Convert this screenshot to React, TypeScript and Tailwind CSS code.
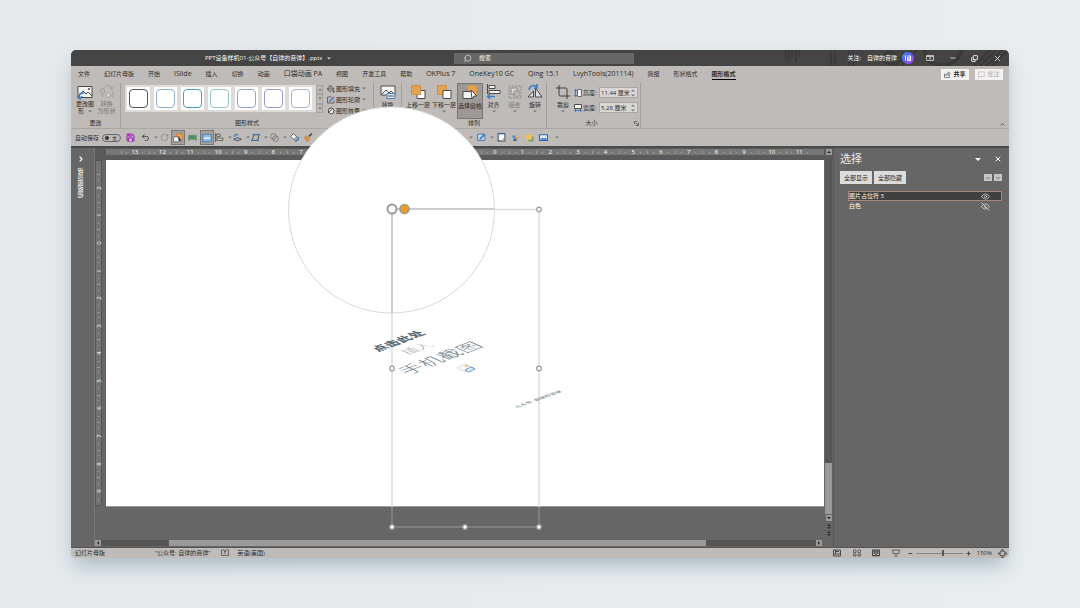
import React from "react";
import {
  Search, Minus, X, Copy, MessageSquare, Undo2, RotateCw, Save, Crop,
  PaintBucket, Eye, EyeOff, ChevronUp, ChevronDown, ChevronRight,
} from "lucide-react";

const tabs = [
  "文件", "幻灯片母版", "开始", "ISlide", "插入", "切换", "动画", "口袋动画 PA", "视图", "开发工具", "帮助",
  "OKPlus 7", "OneKey10 GC", "Qing 15.1", "LvyhTools(201114)", "简报", "形状格式", "图形格式",
];

const styleBorders = [
  "border-[#555555]", "border-[#93b1d2]", "border-[#45a5b0]", "border-[#8fcbb9]",
  "border-[#97a3d2]", "border-[#a197d0]", "border-[#aab1c2]",
];

const hNumbers = [13, 12, 11, 10, 9, 8, 7, 6, 5, 4, 3, 2, 1, 0, 1, 2, 3, 4, 5, 6, 7, 8, 9, 10, 11];
const vNumbers = [2, 1, 0, 1, 2, 3, 4, 5, 6, 7, 8, 9];

type Kids = { children?: React.ReactNode };

function Svg({ children, w = 16, className = "size-4" }: Kids & { w?: number; className?: string }) {
  return (
    <svg viewBox={`0 0 ${w} 16`} className={className} fill="none" stroke="#4a4a4a" strokeWidth="1" aria-hidden="true">
      {children}
    </svg>
  );
}

function Caret({ className = "" }: { className?: string }) {
  return (
    <svg viewBox="0 0 4 3" className={`h-[3px] w-1 shrink-0 ${className}`} aria-hidden="true">
      <path d="M0 .5h4L2 2.5z" fill="#777" />
    </svg>
  );
}

function Group({ label, className = "", children }: Kids & { label: string; className?: string }) {
  return (
    <section className={`flex flex-col border-r border-[#a39f9c] ${className}`}>
      <div className="flex h-9 items-start">{children}</div>
      <div className="text-center leading-[9px]">{label}</div>
    </section>
  );
}

function Tool({ label, icon, className = "", caret = false }: { label: string; icon: React.ReactNode; className?: string; caret?: boolean }) {
  return (
    <button className={`flex h-9 shrink-0 flex-col items-center whitespace-nowrap pt-px ${className}`}>
      {icon}
      <span className="mt-px leading-[8px]">{label}</span>
      {caret && <Caret className="mt-px" />}
    </button>
  );
}

function Quick({ children, caret = false, className = "w-[14px]" }: Kids & { caret?: boolean; className?: string }) {
  return (
    <button className={`flex h-[15px] shrink-0 items-center justify-center gap-1 ${className}`}>
      {children}
      {caret && <Caret />}
    </button>
  );
}

function Field({ label, value, icon }: { label: string; value: string; icon: React.ReactNode }) {
  return (
    <label className="flex h-[11px] items-center">
      {icon}
      <span className="w-4 whitespace-nowrap">{label}:</span>
      <span className="flex h-[11px] w-[39px] items-center border border-[#aaa6a3] bg-[#dad7d5]">
        <input className="w-[31px] bg-transparent pl-px text-[6px] leading-[8px] outline-none" defaultValue={value} />
        <svg viewBox="0 0 4 8" className="h-2 w-1" fill="#777" aria-hidden="true">
          <path d="M0 2.5 2 .5 4 2.5zM0 5.5h4L2 7.5z" />
        </svg>
      </span>
    </label>
  );
}

function TitleBar() {
  return (
    <header className="relative flex h-4 shrink-0 items-center bg-[#444] text-[6px] text-white">
      <svg viewBox="0 0 240 16" className="absolute right-0 top-0 h-4 w-60" fill="none" stroke="#393939" aria-hidden="true">
        <path d="M17 0v9M20 0v11M23 0v8M27 0v12M30 0v6M62 0v16M66 0v16M80 0v16M84 0v16" strokeWidth="1.5" />
        <circle cx="121" cy="8" r="6" strokeWidth="3" />
        <path d="M156 0c0 20 34 20 36 0" strokeWidth="4" />
        <path d="m205 16 16-16M211 16 227 0M217 16 233 0M223 16 239 0M126 16l16-16M132 16l16-16" strokeWidth="2" />
      </svg>
      <div className="flex w-[383px] shrink-0 items-center gap-1 pl-[134px]">
        <h1 className="whitespace-nowrap">PPT设备样机01-公众号【自律的音律】.pptx</h1>
        <svg viewBox="0 0 4 3" className="h-[3px] w-1" fill="#ddd" aria-hidden="true"><path d="M0 .5h4L2 2.5z" /></svg>
      </div>
      <label className="flex h-[11px] w-[180px] items-center gap-[7px] bg-[#666] pl-[9px]">
        <Search className="size-[9px] -scale-x-100" strokeWidth={1.5} />
        <input aria-label="搜索" placeholder="搜索" className="w-24 bg-transparent text-[6px] leading-[9px] outline-none placeholder:text-white" />
      </label>
      <div className="relative ml-auto flex items-center">
        <span>关注:</span>
        <span className="ml-[6px]">自律的音律</span>
        <span className="ml-[5px] flex size-3 items-center justify-center rounded-full bg-gradient-to-br from-[#2f9bff] via-[#5a5cf0] to-[#c23cf0]">
          <svg viewBox="0 0 8 8" className="size-2" fill="none" stroke="#fff" strokeWidth="1" aria-hidden="true">
            <path d="M1.5 1.5v5M3.5 3v3.500M3.500 2h3v4.500h-3M5 3v3" />
          </svg>
        </span>
        <button aria-label="功能区显示选项" className="ml-[12px]">
          <svg viewBox="0 0 8 8" className="size-2" fill="none" stroke="#ddd" strokeWidth=".8" aria-hidden="true">
            <path d="M.5 1.500h7v5h-7zM.5 2.500h7M4 6V3.500M3 4.500l1-1 1 1" />
          </svg>
        </button>
        <button aria-label="最小化" className="ml-[15px]"><Minus className="size-2" strokeWidth={2} /></button>
        <button aria-label="还原" className="ml-[14px]"><Copy className="size-[7px] -scale-x-100 rotate-180" strokeWidth={3} /></button>
        <button aria-label="关闭" className="ml-[15px] mr-[7px]"><X className="size-[9px]" strokeWidth={2} /></button>
      </div>
    </header>
  );
}

function TabRow() {
  return (
    <nav className="flex h-[17px] shrink-0 items-center gap-[14px] pl-[7px] pr-[6px] text-[6px]">
      {tabs.map((t, i) => (
        <button
          key={t}
          className={`shrink-0 whitespace-nowrap border-b leading-[10px] ${/[A-Z]/.test(t) ? "text-[7px]" : ""} ${i === tabs.length - 1 ? "border-black font-bold" : "border-transparent"}`}
        >
          {t}
        </button>
      ))}
      <div className="ml-auto flex gap-[6px] pb-px">
        <button className="flex h-[11px] w-7 items-center justify-center gap-[2px] bg-[#f3f2f1] font-bold">
          <Svg className="size-[7px]"><path d="M3 7H1v8h12v-4M4 11c0-5 4-6 6-6V2l5 5-5 4V8c-3 0-5 1-6 3z" strokeWidth="1.500" /></Svg>共享
        </button>
        <button className="flex h-[11px] w-7 items-center justify-center gap-[2px] bg-[#f3f2f1] text-[#aaa]"><MessageSquare className="size-[7px]" />批注</button>
      </div>
    </nav>
  );
}

function Ribbon() {
  return (
    <div className="relative flex h-[46px] shrink-0 border-b border-[#aaa6a3]">
      <Group label="更改" className="w-[50px]">
        <button className="flex w-7 shrink-0 flex-col items-center whitespace-nowrap leading-[7px]">
          <Svg className="my-px size-4">
            <path d="M1 2.500h14v11H1z" fill="#f4f4f4" /><path d="m2 12 4-5 3 3 2-2 4 4" /><circle cx="12" cy="5" r=".7" />
            <path d="M7 9.500c-4-2-6 2-4 5m-3-2 3 2.500 2-3" stroke="#3d7cc0" strokeWidth="1.500" />
          </Svg>
          更改图<span className="flex items-center gap-1">形<Caret /></span>
        </button>
        <button className="flex w-[15px] shrink-0 flex-col items-center whitespace-nowrap leading-[7px] text-[#777]">
          <Svg className="my-px size-4">
            <g stroke="#a09c99"><ellipse cx="3.500" cy="7" rx="2" ry="3" /><path d="M3.500 10v3M6 3c3-3 6-1 7 2M13 5l-2-1m2 1 1-2" /><path d="m9 8 3 3-3 3-2-3z" fill="#dcd9d7" /><path d="M14 7v7" /></g>
          </Svg>
          转换<span>为形状</span>
        </button>
      </Group>

      <Group label="图形样式" className="w-[253px]">
        <div className="ml-[4px] mt-[2px] flex shrink-0 gap-1 bg-[#dedbd9] p-[2px] pr-1">
          {styleBorders.map((c) => (
            <button key={c} aria-label="样式" className="flex size-[23px] items-center justify-center bg-white p-[2px]">
              <span className={`size-full rounded-[4px] border ${c}`} />
            </button>
          ))}
        </div>
        <div className="mt-[2px] flex h-7 w-[7px] shrink-0 flex-col">
          {[0, 1, 2].map((n) => (
            <button key={n} aria-label="滚动" className="flex flex-1 items-center justify-center border border-[#a5a19e]">
              <Caret className={n === 0 ? "rotate-180" : ""} />
            </button>
          ))}
        </div>
        <div className="ml-1 flex shrink-0 flex-col whitespace-nowrap">
          {[
            ["图形填充", <PaintBucket key="a" className="size-2" />],
            ["图形轮廓", <Svg key="b" className="size-2"><path d="M14 9v5H1V2h8" strokeWidth="1.500" /><path d="M5 11 14 2" stroke="#3d7cc0" strokeWidth="3" /></Svg>],
            ["图形效果", <Svg key="c" className="size-2"><path d="m4 3 6-1 4 4-1 6-5 2-5-4z" fill="#f4f4f4" strokeWidth="2" /><path d="m2 12 9-8" strokeWidth="2" /></Svg>],
          ].map(([t, ic]) => (
            <button key={t as string} className="flex h-[11px] items-center gap-px">{ic}<span>{t}</span><Caret className="ml-px" /></button>
          ))}
        </div>
      </Group>

      <div className="w-[28px] border-r border-[#a39f9c]">
        <Tool label="替换" className="w-[27px]" icon={
          <Svg><path d="M1 2h14v9H1z" fill="#f4f4f4" /><path d="m2 10 4-4 3 3 2-2 3 3" /><path d="M7 9.500h8v5H7z" fill="#e4edf7" stroke="#3d7cc0" /><path d="M8 12h6" /></Svg>} />
      </div>

      <Group label="排列" className="w-[145px]">
        <Tool caret label="上移一层" className="ml-[3px] w-[26px]" icon={<Svg><path d="M7 6.500h8v8H7z" fill="#fff" /><path d="M1.500 1.500h9v9h-9z" fill="#e3a352" stroke="#cf9145" /></Svg>} />
        <Tool caret label="下移一层" className="w-[26px]" icon={<Svg><path d="M1.500 1.500h9v9h-9z" fill="#e3a352" stroke="#cf9145" /><path d="M7 6.500h8v8H7z" fill="#fff" /></Svg>} />
        <Tool label="选择窗格" className="w-[26px] border border-[#777] bg-[#9c9996]" icon={<Svg><path d="M6 .5h9v10H6z" fill="#e3a352" stroke="#cf9145" /><path d="M1 6.500h10v7H1z" fill="#f4f4f4" /><path d="m9 5 6 6h-3l-2 3z" fill="#fff" /></Svg>} />
        <Tool caret label="对齐" className="w-[21px]" icon={<Svg><path d="M1.500 0v10" /><path d="M3 1.500h6v3H3zM3 6.500h11v3H3z" fill="#f4f4f4" /><path d="M2 12.500h7M4 10l-2.500 2.500L4 15" stroke="#3d7cc0" strokeWidth="1.500" /></Svg>} />
        <Tool caret label="组合" className="w-[21px] text-[#777]" icon={<Svg><path d="M2 2h12v12H2z" stroke="#8d8a88" strokeDasharray="2 1" /><path d="M4 4h6v6H4zM7 7h5v5H7z" stroke="#8d8a88" fill="#dcd9d7" /></Svg>} />
        <Tool caret label="旋转" className="w-[20px]" icon={<Svg><path d="M8.500 4v9H15zM6.500 7v6H1z" fill="#d8e0e8" /><path d="M2 6c0-4 5-6 8-3m-3 1h3V0" stroke="#3d7cc0" strokeWidth="1.500" /></Svg>} />
      </Group>

      <Group label="大小" className="relative w-[94px] pr-1">
        <Tool caret label="裁剪" className="ml-[6px] w-[20px]" icon={<Crop className="size-4" strokeWidth={1.3} />} />
        <div className="ml-px mt-1 flex flex-col gap-[4px]">
          <Field label="高度" value="11.44 厘米" icon={<Svg className="mr-px size-2"><path d="M7 1h8v14H7z" fill="#f4f4f4" strokeWidth="1.500" /><path d="M3 1v14M0 4l3-3 3 3M0 12l3 3 3-3" stroke="#3d7cc0" strokeWidth="2" /></Svg>} />
          <Field label="宽度" value="5.28 厘米" icon={<Svg className="mr-px size-2"><path d="M1 1h14v8H1z" fill="#f4f4f4" strokeWidth="2" /><path d="M1 13h14M4 10l-3 3 3 3M12 10l3 3-3 3" stroke="#3d7cc0" strokeWidth="2" /></Svg>} />
        </div>
        <svg viewBox="0 0 6 6" className="absolute bottom-[2px] right-px size-[5px]" fill="none" stroke="#555" aria-hidden="true"><path d="M.5 4V.5H4M2 2l3 3M5.500 2v3.500H2" /></svg>
      </Group>
      <button aria-label="折叠功能区" className="ml-auto mr-[3px] self-end"><ChevronUp className="size-[7px]" /></button>
    </div>
  );
}

function QuickBar() {
  return (
    <div className="flex h-[19px] shrink-0 items-center border-b-2 border-[#4a4a4a] pl-1">
      <label className="flex items-center gap-[3px] whitespace-nowrap">
        自动保存
        <span className="relative flex h-2 w-[19px] items-center justify-end rounded-full border border-[#666] pr-[3px] text-[5px]">
          <input type="checkbox" className="absolute left-[2px] size-1 appearance-none rounded-full bg-[#333]" />关
        </span>
      </label>
      <Quick className="w-[18px]"><Save className="size-[9px] fill-[#e9c8ee] text-[#9c35ac]" strokeWidth={3.5} /></Quick>
      <Quick caret className="w-[20px]"><Undo2 className="size-[9px]" /></Quick>
      <Quick className="w-[10px]"><RotateCw className="size-[9px] text-[#8a8785]" /></Quick>
      <Quick className="ml-[2px] w-[14px] border border-[#777] bg-[#a5a19e]"><Svg className="size-[10px]"><path d="M6 1h9v9H6z" fill="#f0a04b" stroke="#c07c2c" /><path d="M1 6h9v8H1z" fill="#f4f4f4" /><path d="m8 6 5 6-3 1z" fill="#333" /></Svg></Quick>
      <Quick className="w-[15px]"><Svg className="size-[9px]"><path d="M1 4h14v7H1z" fill="#5c9c68" stroke="#4d8559" /><path d="M2 11v3M14 11v3M5 5v5M9 5v5" /></Svg></Quick>
      <Quick className="w-[14px] border border-[#777] bg-[#a5a19e]"><Svg className="size-[10px]"><path d="M1 2h14v12H1z" fill="#8db8e6" stroke="#34679c" /><path d="M3 8h10" stroke="#fff" strokeWidth="2" /></Svg></Quick>
      <Quick caret className="w-[18px]"><Svg className="size-[9px]"><path d="M1 0v16" strokeWidth="1.500" /><path d="M3 2h6v4H3zM3 9h11v4H3z" fill="#ddd" strokeWidth="1.500" /></Svg></Quick>
      <Quick caret className="w-[18px]"><Svg className="size-[9px]"><path d="M1 11 8 8l7 3-7 3z" fill="#8db8e6" strokeWidth="1.500" /><path d="M2 7c0-4 4-6 7-3" stroke="#3d7cc0" strokeWidth="2" /></Svg></Quick>
      <Quick caret className="w-[19px]"><Svg className="size-[9px]"><path d="M5 3h9l-2 10H2z" strokeWidth="1.500" /><path d="M4 2h2v2H4zM13 2h2v2h-2zM1 12h2v2H1zM11 12h2v2h-2z" fill="#3d7cc0" stroke="#3d7cc0" strokeWidth="1.500" /></Svg></Quick>
      <Quick caret className="w-[18px]"><Svg className="size-[9px]"><circle cx="6" cy="6" r="5" stroke="#777" strokeWidth="1.500" /><circle cx="10" cy="10" r="5" stroke="#777" strokeWidth="1.500" /></Svg></Quick>
      <Quick><Svg className="size-[9px]"><path d="m6 1 6 6-5 5-6-6z" fill="#f4f4f4" strokeWidth="1.500" /><path d="M15 7v4l-6 4" stroke="#3d7cc0" strokeWidth="3" /></Svg></Quick>
      <Quick><Svg className="size-[9px]"><path d="m9 6 5-5" strokeWidth="3" /><path d="m3 5 7 4-3 6-6-5z" fill="#e8913a" stroke="#b96b26" /></Svg></Quick>
      <Quick className="ml-[154px] w-1"><Caret /></Quick>
      <Quick caret className="ml-1 w-[17px]"><Svg className="size-[9px]"><path d="M1 2h13v11H1z" fill="#cbdcf0" stroke="#34679c" strokeWidth="1.500" /><path d="m5 11 8-8" stroke="#3d7cc0" strokeWidth="3" /></Svg></Quick>
      <Quick><Svg className="size-[9px]"><path d="M2 1h12v13H2z" fill="#fff" stroke="#3e5c84" strokeWidth="2" /><path d="M12 9v4H8" stroke="#e8913a" strokeWidth="2" /></Svg></Quick>
      <Quick><Svg className="size-[8px]"><path d="M3 3h6v5H3z" fill="#4b8bd0" stroke="none" /><path d="M9 5h6v5H9z" fill="#f0a04b" stroke="none" /><path d="M5 9h6v5H5z" fill="#2d65a4" stroke="none" /></Svg></Quick>
      <Quick><Svg className="size-[9px]"><path d="M6 6h9v9H6z" fill="#7a9d6d" stroke="none" /><path d="M2 2h10v10H2z" fill="#efc05e" stroke="none" /></Svg></Quick>
      <Quick><Svg className="size-[9px]"><path d="M1 3h14v10H1z" fill="#e6f0fa" stroke="#2d65a4" strokeWidth="2" /><path d="m2 12 4-4 3 2 2-2 3 4z" fill="#2d7ac6" stroke="none" /></Svg></Quick>
      <Quick><Caret /></Quick>
    </div>
  );
}

function ScrollArrow({ className }: { className: string }) {
  return (
    <button aria-label="滚动" className="flex size-[6px] shrink-0 items-center justify-center bg-[#9a9a9a]">
      <svg viewBox="0 0 4 4" className={`size-1 ${className}`} fill="#222" aria-hidden="true"><path d="M0 3h4L2 1z" /></svg>
    </button>
  );
}

function Editor() {
  return (
    <div className="flex min-w-0 flex-1 flex-col">
      <div className="flex h-3 shrink-0 bg-[#5a5a5a] pl-[11px] pt-px">
        <div className="flex h-[6px] min-w-0 flex-1 items-center bg-[#777] pl-[15px] pr-[11px] text-[6px] leading-[6px] text-white">
          {hNumbers.map((n, i) => (
            <span key={i} className="flex flex-1 items-center justify-between">
              <i className="h-[3px] w-px bg-[#999]" /><i className="size-px bg-[#aaa]" />
              {n}
              <i className="size-px bg-[#aaa]" /><i className="size-px" />
            </span>
          ))}
        </div>
        <div className="flex w-[9px] justify-center"><ScrollArrow className="" /></div>
      </div>
      <div className="flex min-h-0 flex-1">
        <div className="w-[11px] shrink-0">
          <div className="flex h-[346px] w-[7px] flex-col border border-[#555] bg-[#737373] pt-[13px] text-[6px] text-white">
            {vNumbers.map((n, i) => (
              <span key={i} className="flex flex-1 flex-col items-center justify-between">
                <i className="h-px w-[3px] bg-[#999]" /><i className="size-px bg-[#aaa]" />
                <span className="-rotate-90 leading-[6px]">{n}</span>
                <i className="size-px bg-[#aaa]" /><i className="size-px" />
              </span>
            ))}
          </div>
        </div>
        <div className="flex min-w-0 flex-1 flex-col">
          <main className="h-[347px] border-b border-[#999] bg-white" />
        </div>
        <div className="flex w-[9px] shrink-0 flex-col items-center bg-[#666]">
          <div className="flex w-[7px] flex-1 flex-col justify-end bg-[#555]"><div className="h-[51px] bg-[#9a9a9a]" /></div>
          <div className="mt-px"><ScrollArrow className="rotate-180" /></div>
          <svg viewBox="0 0 6 18" className="h-[18px] w-[6px]" fill="#2c2c2c" aria-hidden="true">
            <path d="M1 5h4L3 3zM1 6h4L3 8zM1 12h4l-2-2zM1 13h4l-2 2z" />
          </svg>
        </div>
      </div>
      <div className="flex h-2 shrink-0 items-center pb-px pr-[11px]">
        <ScrollArrow className="-rotate-90" />
        <div className="flex h-[6px] flex-1 bg-[#555] pl-[68px]"><div className="w-[83%] bg-[#9a9a9a]" /></div>
        <ScrollArrow className="rotate-90" />
      </div>
    </div>
  );
}

function SelectionPane() {
  return (
    <aside className="w-[176px] shrink-0 border-l border-[#5a5a5a] pl-[6px] pr-[7px] pt-[5px] text-[6px] text-white">
      <div className="flex h-3 items-center">
        <h2 className="text-[11px] leading-3 text-[#e8e8e8]">选择</h2>
        <button aria-label="任务窗格选项" className="ml-auto"><svg viewBox="0 0 6 3" className="h-[3px] w-[6px]" fill="#fff" aria-hidden="true"><path d="M0 0h6L3 3z" /></svg></button>
        <button aria-label="关闭" className="ml-[13px]"><X className="size-2" strokeWidth={3} /></button>
      </div>
      <div className="mt-[6px] flex items-center gap-[2px] text-[#222]">
        <button className="h-[13px] w-8 bg-[#dcdcdc]">全部显示</button>
        <button className="h-[13px] w-8 bg-[#dcdcdc]">全部隐藏</button>
        <button aria-label="上移" className="ml-auto flex h-[7px] w-2 items-center justify-center bg-[#c6c6c6]"><ChevronUp className="size-[6px]" /></button>
        <button aria-label="下移" className="flex h-[7px] w-2 items-center justify-center bg-[#c6c6c6]"><ChevronDown className="size-[6px]" /></button>
      </div>
      <ul className="ml-2 mt-[7px] leading-[8px]">
        <li className="flex h-[10px] items-center justify-between border border-[#a5887a] bg-[#404040] pr-[11px]"><span>图片占位符 3</span><Eye className="size-[9px]" strokeWidth={1.5} /></li>
        <li className="flex h-[10px] items-center justify-between border border-transparent pr-[11px]"><span>白色</span><EyeOff className="size-[9px]" strokeWidth={1.5} /></li>
      </ul>
    </aside>
  );
}

function StatusBar() {
  return (
    <footer className="flex h-[11px] shrink-0 items-center border-t border-[#555] pl-1 pr-[2px]">
      <span>幻灯片母版</span>
      <span className="ml-[50px]">“公众号: 自律的音律”</span>
      <Svg className="ml-[11px] size-[8px]"><path d="M1 2h6l1 1 1-1h6v11H9l-1 1-1-1H1zM8 5v6M6 5h4" strokeWidth="1.500" /></Svg>
      <span className="ml-2">英语(美国)</span>
      <div className="ml-auto flex items-center">
        <Svg className="size-[8px]"><path d="M1 2h14v12H1zM1 10h14M4 5h8M5 2v8" strokeWidth="2" /></Svg>
        <Svg className="ml-3 size-[8px]"><path d="M1 2h5v5H1zM10 2h5v5h-5zM1 10h5v4H1zM10 10h5v4h-5z" strokeWidth="1.500" /></Svg>
        <Svg className="ml-[11px] size-[8px]"><path d="M1 2h14v11H1zM8 2v13M3 5h3M3 8h3M10 5h3M10 8h3" strokeWidth="2.500" /></Svg>
        <Svg className="ml-3 size-[8px]"><path d="M0 2h16M2 2v7h12V2M8 9v5M5 14h6" strokeWidth="1.500" /></Svg>
        <Minus className="ml-2 size-[5px]" strokeWidth={4} />
        <input
          type="range"
          aria-label="缩放"
          defaultValue={58}
          className="mx-[3px] h-[7px] w-[47px] appearance-none bg-[linear-gradient(#8a8785,#8a8785)] bg-[length:100%_1px] bg-center bg-no-repeat [&::-webkit-slider-thumb]:h-[6px] [&::-webkit-slider-thumb]:w-[2px] [&::-webkit-slider-thumb]:appearance-none [&::-webkit-slider-thumb]:bg-[#555]"
        />
        <svg viewBox="0 0 5 5" className="size-[5px]" stroke="#444" aria-hidden="true"><path d="M.5 2.500h4M2.500.5v4" /></svg>
        <span className="ml-[6px]">150%</span>
        <Svg className="ml-[6px] size-[9px]"><path d="M4 4h8v8H4z" strokeWidth="1.500" /><path d="m8 0 2 2H6zM8 16l2-2H6zM0 8l2-2v4zM16 8l-2-2v4z" fill="#333" /></Svg>
      </div>
    </footer>
  );
}

/* Selected placeholder with its resize handles and the zoomed corner. */
function SelectionDrawing() {
  return (
    <svg viewBox="71 50 938 508" className="pointer-events-none absolute left-0 top-0 h-[508px] w-[938px]" fill="none">
      <g stroke="#dcdcdc" strokeWidth="1.500">
        <path d="M392 313v194M539 210v297M494 209.500h45" />
        <path d="M392 507v20h147v-20" stroke="#969696" strokeWidth="1" />
      </g>
      <g fill="#66777f">
        <text transform="matrix(1 -.38 .88 .4 378 352)" fontSize="12" fontWeight="900" fill="#5c6e77">点击此处</text>
        <text transform="matrix(1 -.36 .88 .4 408 355)" fontSize="13" fontWeight="300" fill="#9aa5aa">插入</text>
        <text transform="matrix(1.060 -.4 .88 .4 408 375)" fontSize="18" fontWeight="300">手机截图</text>
        <text transform="matrix(1.060 -.38 .8 .4 517 408)" fontSize="5" fontWeight="700" fill="#8d999e">公众号: 自律的音律</text>
      </g>
      <path d="m457 368 8-4 9 4-8 4z" fill="#fafafa" stroke="#c3cacd" strokeWidth=".7" />
      <path d="m465 370 6-3 4 2-6 3z" fill="#e6eefb" stroke="#4b80d0" strokeWidth=".8" />
      <path d="m464 366 3-1 2 1-3 1z" fill="#f2b54a" />
      <circle cx="391.500" cy="210" r="103" fill="#fff" stroke="#d9d9d9" />
      <path d="M392 209v104M392 209h102" stroke="#bdbdbd" strokeWidth="1.500" />
      <g fill="#fff" stroke="#9b9b9b">
        <circle cx="392" cy="209" r="4.500" strokeWidth="2" />
        <circle cx="404.500" cy="209" r="4.500" strokeWidth="1.700" fill="#f39c1c" />
        {[[539, 209.5], [392, 368.5], [539, 368.5], [392, 527], [465, 527], [539, 527]].map(([x, y]) => (
          <circle key={`${x}-${y}`} cx={x} cy={y} r="2.300" strokeWidth="1.200" />
        ))}
      </g>
    </svg>
  );
}

export default function App() {
  return (
    <div className="flex min-h-screen bg-gradient-to-r from-[#e5e9ec] to-[#e9edef] px-[71px] py-[50px] font-['Open_Sans','Noto_Sans_CJK_SC',sans-serif] text-[6px] leading-[8px] text-[#2b2b2b]">
      <div className="relative flex min-w-0 flex-1 flex-col overflow-hidden rounded-[5px] bg-[#bfbbb8] shadow-[0_10px_20px_-3px_#a9b7bf]">
        <TitleBar />
        <TabRow />
        <Ribbon />
        <QuickBar />
        <div className="flex min-h-0 flex-1 bg-[#666]">
          <div className="flex w-[24px] shrink-0 flex-col items-center border-r border-[#777] pr-1 pt-[7px] text-white">
            <button aria-label="展开缩略图"><ChevronRight className="size-2" strokeWidth={3.5} /></button>
            <span className="mt-[5px] rotate-180 text-[6px] leading-[8px] [writing-mode:vertical-rl]">缩略图窗格</span>
          </div>
          <Editor />
          <SelectionPane />
        </div>
        <StatusBar />
        <SelectionDrawing />
      </div>
    </div>
  );
}
